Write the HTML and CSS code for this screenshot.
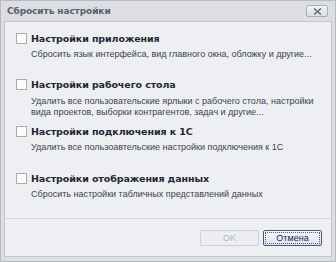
FILE: index.html
```html
<!DOCTYPE html>
<html>
<head>
<meta charset="utf-8">
<link rel="stylesheet" href="styles.css">
</head>
<body>
<div class="window">
  <div class="titlebar">
    <span class="title">Сбросить настройки</span>
    <span class="close"><svg width="9" height="7" viewBox="0 0 9 7"><path d="M1 0.5 L8 6.5 M8 0.5 L1 6.5" stroke="#6a6f78" stroke-width="1.6"/></svg></span>
  </div>
  <div class="panel">
    <div class="options">
      <div class="option">
        <div class="head"><span class="box"></span><span class="label">Настройки приложения</span></div>
        <div class="desc">Сбросить язык интерфейса, вид главного окна, обложку и другие...</div>
      </div>
      <div class="option">
        <div class="head"><span class="box"></span><span class="label">Настройки рабочего стола</span></div>
        <div class="desc">Удалить все пользовательские ярлыки с рабочего стола, настройки<br>вида проектов, выборки контрагентов, задач и другие...</div>
      </div>
      <div class="option">
        <div class="head"><span class="box"></span><span class="label">Настройки подключения к 1С</span></div>
        <div class="desc">Удалить все пользоавтельские настройки подключения к 1С</div>
      </div>
      <div class="option">
        <div class="head"><span class="box"></span><span class="label">Настройки отображения данных</span></div>
        <div class="desc">Сбросить настройки табличных представлений данных</div>
      </div>
    </div>
    <div class="footer">
      <button class="btn disabled">OK</button>
      <button class="btn focused">Отмена</button>
    </div>
  </div>
</div>
</body>
</html>
```
FILE: styles.css
```css
html, body { margin: 0; padding: 0; }
body {
  width: 336px; height: 262px; overflow: hidden;
  font-family: "Liberation Sans", Arial, sans-serif;
  background: #cfd2d9;
}
.window {
  width: 336px; height: 262px; box-sizing: border-box;
  background: #dcdee4;
  border: 1px solid #b6bac3;
  display: flex; flex-direction: column;
  padding: 0 3px 4px 3px;
}
.titlebar {
  height: 20px; flex: none;
  display: flex; align-items: center; justify-content: space-between;
  padding: 0 3px 0 3px;
}
.title { font-family: "DejaVu Sans", sans-serif; font-size: 9px; font-weight: bold; color: #5a606c; letter-spacing: -0.1px; }
.close {
  width: 22px; height: 12px; box-sizing: border-box;
  border: 1px solid #a9adb6; border-radius: 2px;
  background: linear-gradient(#f2f3f6, #dcdfe5);
  display: flex; align-items: center; justify-content: center;
  margin-right: 1px;
}
.panel {
  flex: 1; background: #eeeff3;
  border: 1px solid #c3c6cd;
  display: flex; flex-direction: column;
}
.options { flex: 1; padding: 9px 12px 0 11px; display: flex; flex-direction: column; }
.option { height: 46.7px; flex: none; }
.head { display: flex; align-items: center; height: 14px; }
.box {
  width: 9px; height: 9px; border: 1px solid #a6abb5; background: #fbfbfc;
  margin-right: 4px; flex: none;
}
.label { font-family: "DejaVu Sans", sans-serif; font-size: 9.5px; font-weight: bold; color: #1f2633; letter-spacing: -0.1px; }
.desc { font-size: 9px; color: #3b4250; margin-left: 15px; margin-top: 4px; line-height: 11px; white-space: nowrap; }
.footer {
  flex: none;
  border-top: 1px solid #d3d6dc;
  display: flex; justify-content: flex-end; align-items: flex-start;
  gap: 4px; padding: 11px 9px 10px 0;
}
.btn {
  width: 59px; height: 16px; box-sizing: border-box;
  font-family: "Liberation Sans", Arial, sans-serif; font-size: 9px;
  border-radius: 2px; padding: 0;
}
.disabled { border: 1px solid #cdd0d6; background: #eceef1; color: #b3b7be; }
.focused {
  border: 1px solid #4f5563; background: linear-gradient(#f4f6fc, #dde4f6);
  color: #1f2633; outline: 1px dotted #555b68; outline-offset: -3px;
}
```
